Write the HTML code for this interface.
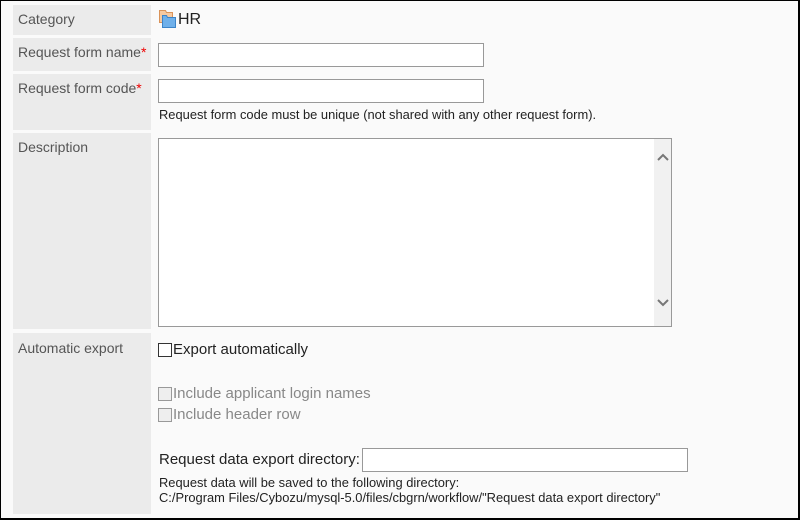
<!DOCTYPE html>
<html><head><meta charset="utf-8"><style>
*{margin:0;padding:0;box-sizing:border-box}
body{width:800px;height:520px;position:relative;background:#fafafa;font-family:"Liberation Sans",Arial,sans-serif;overflow:hidden}
.frame{position:absolute;left:0;top:0;width:800px;height:520px;border:1px solid #000;border-right-width:2px;border-bottom-width:2px}
.lab{position:absolute;left:13px;width:138px;background:#ebebeb;color:#555;font-size:14px;padding:6px 0 0 5px}
.req{color:#e00}
.inp{position:absolute;background:#fff;border:1px solid #999}
.t{position:absolute;font-size:12.9px;color:#222;white-space:nowrap}
.cb{position:absolute;width:14px;height:14px;border:1px solid #333;background:#fff}
.cb.d{border-color:#999;background:#eee}
.ct{position:absolute;font-size:15px;color:#222;white-space:nowrap}
.ct.d{color:#888}
</style></head><body>
<div class="frame"></div>
<div class="lab" style="top:5px;height:30px">Category</div>
<div class="lab" style="top:38px;height:33px">Request form name<span class="req">*</span></div>
<div class="lab" style="top:74px;height:56px">Request form code<span class="req">*</span></div>
<div class="lab" style="top:133px;height:196px">Description</div>
<div class="lab" style="top:333px;height:181px;padding-top:7px">Automatic export</div>

<svg style="position:absolute;left:159px;top:10px" width="19" height="19" viewBox="0 0 19 19">
<path d="M0.5 0.5h6l1 2h6v10h-13z" fill="#f6c9a0" stroke="#d9935a" stroke-width="1"/>
<path d="M3.5 5.5h4l1 2h8v10h-13z" fill="#6fb0ea" stroke="#3c84c8" stroke-width="1"/>
</svg>
<div class="ct" style="left:178px;top:11px;font-size:16px">HR</div>

<div class="inp" style="left:158px;top:43px;width:326px;height:24px"></div>
<div class="inp" style="left:158px;top:79px;width:326px;height:24px"></div>
<div class="t" style="left:159px;top:107px">Request form code must be unique (not shared with any other request form).</div>

<div class="inp" style="left:158px;top:138px;width:514px;height:189px"></div>
<div style="position:absolute;left:654px;top:139px;width:17px;height:187px;background:#f1f1f1"></div>
<svg style="position:absolute;left:656px;top:153px" width="14" height="10"><path d="M2 7L7 2L12 7" fill="none" stroke="#777" stroke-width="2"/></svg>
<svg style="position:absolute;left:656px;top:298px" width="14" height="10"><path d="M2 2L7 7L12 2" fill="none" stroke="#777" stroke-width="2"/></svg>

<div class="cb" style="left:158px;top:343px"></div>
<div class="ct" style="left:173px;top:341px">Export automatically</div>
<div class="cb d" style="left:158px;top:387px"></div>
<div class="ct d" style="left:173px;top:385px">Include applicant login names</div>
<div class="cb d" style="left:158px;top:408px"></div>
<div class="ct d" style="left:173px;top:406px">Include header row</div>
<div class="ct" style="left:159px;top:451px;font-size:15px">Request data export directory:</div>
<div class="inp" style="left:362px;top:448px;width:326px;height:24px"></div>
<div class="t" style="left:159px;top:475px">Request data will be saved to the following directory:</div>
<div class="t" style="left:159px;top:490px">C:/Program Files/Cybozu/mysql-5.0/files/cbgrn/workflow/"Request data export directory"</div>
</body></html>
